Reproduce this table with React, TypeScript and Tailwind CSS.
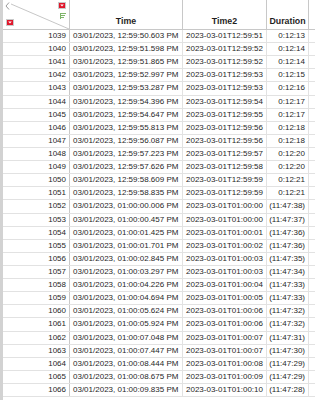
import React from 'react';

interface Row {
  n: number;
  time: string;
  time2: string;
  dur: string;
}

const raw: [number, string, string, string][] = [
  [1039, '12:59:50.603 PM', '2023-03-01T12:59:51', '0:12:13'],
  [1040, '12:59:51.598 PM', '2023-03-01T12:59:52', '0:12:14'],
  [1041, '12:59:51.865 PM', '2023-03-01T12:59:52', '0:12:14'],
  [1042, '12:59:52.997 PM', '2023-03-01T12:59:53', '0:12:15'],
  [1043, '12:59:53.287 PM', '2023-03-01T12:59:53', '0:12:16'],
  [1044, '12:59:54.396 PM', '2023-03-01T12:59:54', '0:12:17'],
  [1045, '12:59:54.647 PM', '2023-03-01T12:59:55', '0:12:17'],
  [1046, '12:59:55.813 PM', '2023-03-01T12:59:56', '0:12:18'],
  [1047, '12:59:56.087 PM', '2023-03-01T12:59:56', '0:12:18'],
  [1048, '12:59:57.223 PM', '2023-03-01T12:59:57', '0:12:20'],
  [1049, '12:59:57.626 PM', '2023-03-01T12:59:58', '0:12:20'],
  [1050, '12:59:58.609 PM', '2023-03-01T12:59:59', '0:12:21'],
  [1051, '12:59:58.835 PM', '2023-03-01T12:59:59', '0:12:21'],
  [1052, '01:00:00.006 PM', '2023-03-01T01:00:00', '(11:47:38)'],
  [1053, '01:00:00.457 PM', '2023-03-01T01:00:00', '(11:47:37)'],
  [1054, '01:00:01.425 PM', '2023-03-01T01:00:01', '(11:47:36)'],
  [1055, '01:00:01.701 PM', '2023-03-01T01:00:02', '(11:47:36)'],
  [1056, '01:00:02.845 PM', '2023-03-01T01:00:03', '(11:47:35)'],
  [1057, '01:00:03.297 PM', '2023-03-01T01:00:03', '(11:47:34)'],
  [1058, '01:00:04.226 PM', '2023-03-01T01:00:04', '(11:47:33)'],
  [1059, '01:00:04.694 PM', '2023-03-01T01:00:05', '(11:47:33)'],
  [1060, '01:00:05.624 PM', '2023-03-01T01:00:06', '(11:47:32)'],
  [1061, '01:00:05.924 PM', '2023-03-01T01:00:06', '(11:47:32)'],
  [1062, '01:00:07.048 PM', '2023-03-01T01:00:07', '(11:47:31)'],
  [1063, '01:00:07.447 PM', '2023-03-01T01:00:07', '(11:47:30)'],
  [1064, '01:00:08.444 PM', '2023-03-01T01:00:08', '(11:47:29)'],
  [1065, '01:00:08.675 PM', '2023-03-01T01:00:09', '(11:47:29)'],
  [1066, '01:00:09.835 PM', '2023-03-01T01:00:10', '(11:47:28)'],
];

const rows: Row[] = raw.map(([n, t, t2, d]) => ({ n, time: '03/01/2023, ' + t, time2: t2, dur: d }));

function RedDrop() {
  return (
    <svg width="8" height="7" viewBox="0 0 8 7">
      <rect x="0.5" y="0.5" width="7" height="6" fill="#fff" stroke="#c9c9c9" />
      <rect x="1" y="1" width="6" height="5" fill="#e0162b" />
      <path d="M2.2 2.6 L5.8 2.6 L4 4.6 Z" fill="#fff" />
    </svg>
  );
}

function Corner() {
  return (
    <div className="relative w-[67px] h-full">
      <svg className="absolute inset-0" width="67" height="30" viewBox="0 0 67 30">
        <line x1="8" y1="4" x2="66" y2="29" stroke="#b8b8b8" strokeWidth="0.8" />
        <path d="M6 2.5 L3 6 L6 9.5" fill="none" stroke="#9a9a9a" strokeWidth="1" />
        <g fill="#7fb56a">
          <rect x="57" y="13" width="1" height="6" />
          <rect x="58" y="13" width="5" height="1" />
          <rect x="58" y="15" width="4" height="1" />
          <rect x="58" y="17" width="3" height="1" />
        </g>
      </svg>
      <div className="absolute left-[55px] top-[2px]"><RedDrop /></div>
      <div className="absolute left-[3px] top-[19px]"><RedDrop /></div>
    </div>
  );
}

export default function App() {
  return (
    <div
      className="w-[315px] h-[400px] overflow-hidden bg-white flex text-[#1f1f1f] text-[8px] leading-none"
      style={{ fontFamily: '"Liberation Sans", Arial, sans-serif' }}
    >
      <div className="w-[3px] shrink-0 bg-[#d2d2d2]" />
      <div className="flex-1 flex flex-col">
        <div className="flex h-[30px] border-b border-[#c8c8c8] shrink-0 text-[8.8px]">
          <div className="w-[67px] shrink-0 border-r border-[#c8c8c8]">
            <Corner />
          </div>
          <div className="w-[113px] shrink-0 border-r border-[#c8c8c8] flex items-end justify-center pb-[3px] font-bold">Time</div>
          <div className="w-[84px] shrink-0 border-r border-[#c8c8c8] flex items-end justify-center pb-[3px] font-bold">Time2</div>
          <div className="w-[42px] shrink-0 border-r border-[#c8c8c8] flex items-end justify-center pb-[3px] font-bold">Duration</div>
          <div className="flex-1" />
        </div>
        {rows.map((r) => (
          <div key={r.n} className="flex h-[13.11px] shrink-0 border-b border-[#e2e2e2]">
            <div className="w-[67px] shrink-0 border-r border-[#c8c8c8] flex items-center justify-end pr-[3px]">{r.n}</div>
            <div className="w-[113px] shrink-0 border-r border-[#e2e2e2] flex items-center pl-[3px] whitespace-nowrap">{r.time}</div>
            <div className="w-[84px] shrink-0 border-r border-[#e2e2e2] flex items-center pl-[3px] whitespace-nowrap">{r.time2}</div>
            <div className="w-[42px] shrink-0 border-r border-[#e2e2e2] flex items-center justify-end pr-[3px] whitespace-nowrap">{r.dur}</div>
            <div className="flex-1" />
          </div>
        ))}
      </div>
    </div>
  );
}
